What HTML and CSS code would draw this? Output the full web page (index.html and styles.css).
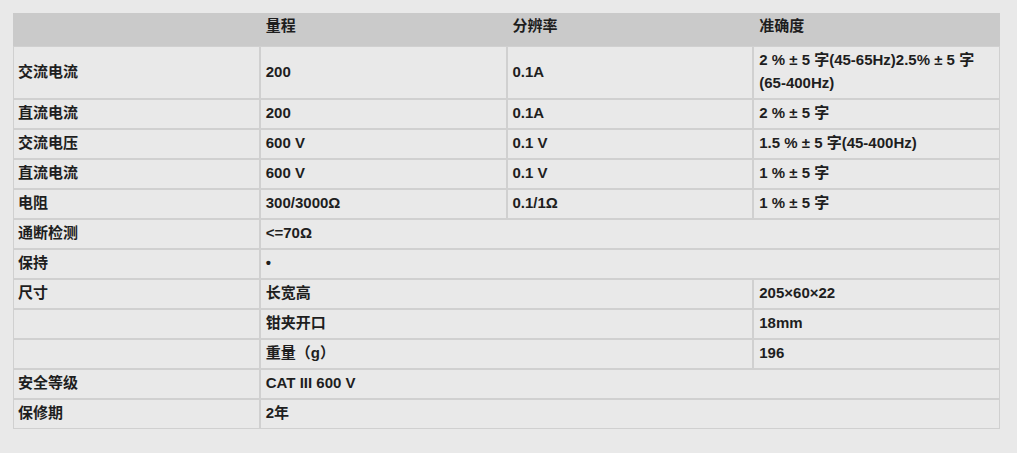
FILE: index.html
```html
<!DOCTYPE html>
<html lang="zh-CN">
<head>
<meta charset="utf-8">
<title>参数</title>
<link rel="stylesheet" href="styles.css">
</head>
<body>
<table class="spec">
  <colgroup><col><col><col><col></colgroup>
  <thead>
    <tr><th></th><th>量程</th><th>分辨率</th><th>准确度</th></tr>
  </thead>
  <tbody>
    <tr><td>交流电流</td><td>200</td><td>0.1A</td><td>2 % ± 5 字(45-65Hz)2.5% ± 5 字(65-400Hz)</td></tr>
    <tr><td>直流电流</td><td>200</td><td>0.1A</td><td>2 % ± 5 字</td></tr>
    <tr><td>交流电压</td><td>600 V</td><td>0.1 V</td><td>1.5 % ± 5 字(45-400Hz)</td></tr>
    <tr><td>直流电流</td><td>600 V</td><td>0.1 V</td><td>1 % ± 5 字</td></tr>
    <tr><td>电阻</td><td>300/3000Ω</td><td>0.1/1Ω</td><td>1 % ± 5 字</td></tr>
    <tr><td>通断检测</td><td colspan="3">&lt;=70Ω</td></tr>
    <tr><td>保持</td><td colspan="3">•</td></tr>
    <tr><td>尺寸</td><td colspan="2">长宽高</td><td>205×60×22</td></tr>
    <tr><td></td><td colspan="2">钳夹开口</td><td>18mm</td></tr>
    <tr><td></td><td colspan="2">重量（g）</td><td>196</td></tr>
    <tr><td>安全等级</td><td colspan="3">CAT III 600 V</td></tr>
    <tr><td>保修期</td><td colspan="3">2年</td></tr>
  </tbody>
</table>
</body>
</html>
```
FILE: styles.css
```css
html, body {
  margin: 0;
  background: #e9e9e9;
}
body {
  padding: 13px;
  font-family: "Liberation Sans", "Noto Sans CJK SC", sans-serif;
  font-size: 15px;
  font-weight: bold;
  color: #1e1e1e;
}
.spec {
  width: 987px;
  table-layout: fixed;
  border-collapse: separate;
  border-spacing: 0;
}
.spec th,
.spec td {
  text-align: left;
  line-height: 23px;
  font-weight: bold;
}
.spec th {
  vertical-align: top;
  background: #cacaca;
  border: 1px solid #cacaca;
  padding: 0 4px 8px 5px;
}
.spec td {
  vertical-align: middle;
  border: 1px solid #d0d0d0;
  padding: 1px 4px 4px 5px;
}
.spec td:first-child {
  padding-left: 4px;
}
```
